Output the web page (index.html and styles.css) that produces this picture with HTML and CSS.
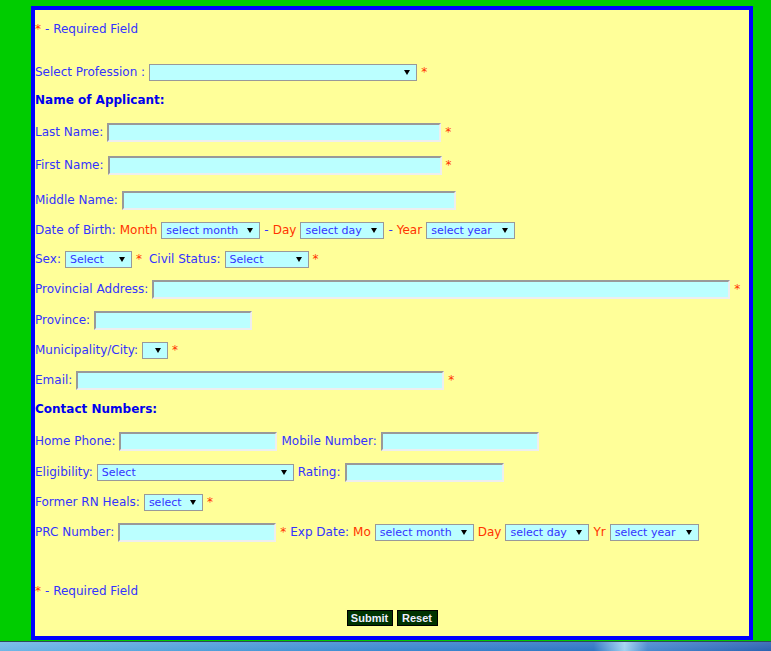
FILE: index.html
```html
<!DOCTYPE html>
<html>
<head>
<meta charset="utf-8">
<title>Application Form</title>
<link rel="stylesheet" href="styles.css">
</head>
<body>
<div class="frame">
  <form class="form">
    <div class="row g9"><span class="req">*</span><span class="lbl">- Required Field</span></div>

    <div class="row g23">
      <span class="lbl">Select Profession :</span>
      <span class="dd"><select class="w268"><option></option></select></span>
      <span class="req">*</span>
    </div>

    <div class="row g8"><span class="head">Name of Applicant:</span></div>

    <div class="row g12">
      <span class="lbl">Last Name:</span>
      <input type="text" class="w334">
      <span class="req">*</span>
    </div>

    <div class="row g13">
      <span class="lbl">First Name:</span>
      <input type="text" class="w334">
      <span class="req">*</span>
    </div>

    <div class="row g15">
      <span class="lbl">Middle Name:</span>
      <input type="text" class="w334">
    </div>

    <div class="row g10">
      <span class="lbl">Date of Birth:</span>
      <span class="req">Month</span>
      <span class="dd"><select class="w99"><option>select month</option></select></span>
      <span class="lbl">-</span><span class="req">Day</span>
      <span class="dd"><select class="w84"><option>select day</option></select></span>
      <span class="lbl">-</span><span class="req">Year</span>
      <span class="dd"><select class="w89"><option>select year</option></select></span>
    </div>

    <div class="row g9">
      <span class="lbl">Sex:</span>
      <span class="dd"><select class="w67"><option>Select</option></select></span>
      <span class="req">*</span>
      <span class="lbl civil">Civil Status:</span>
      <span class="dd"><select class="w84"><option>Select</option></select></span>
      <span class="req">*</span>
    </div>

    <div class="row g10">
      <span class="lbl">Provincial Address:</span>
      <input type="text" class="w578">
      <span class="req">*</span>
    </div>

    <div class="row g11">
      <span class="lbl">Province:</span>
      <input type="text" class="w158">
    </div>

    <div class="row g10">
      <span class="lbl">Municipality/City:</span>
      <span class="dd"><select class="w26"><option></option></select></span>
      <span class="req">*</span>
    </div>

    <div class="row g10">
      <span class="lbl">Email:</span>
      <input type="text" class="w368">
      <span class="req">*</span>
    </div>

    <div class="row g9"><span class="head">Contact Numbers:</span></div>

    <div class="row g12">
      <span class="lbl">Home Phone:</span>
      <input type="text" class="w158">
      <span class="lbl">Mobile Number:</span>
      <input type="text" class="w158">
    </div>

    <div class="row g11">
      <span class="lbl">Eligibility:</span>
      <span class="dd"><select class="w197"><option>Select</option></select></span>
      <span class="lbl">Rating:</span>
      <input type="text" class="w159">
    </div>

    <div class="row g10">
      <span class="lbl">Former RN Heals:</span>
      <span class="dd"><select class="w59"><option>select</option></select></span>
      <span class="req">*</span>
    </div>

    <div class="row g10">
      <span class="lbl">PRC Number:</span>
      <input type="text" class="w158">
      <span class="req">*</span>
      <span class="lbl">Exp Date:</span>
      <span class="req">Mo</span>
      <span class="dd"><select class="w99"><option>select month</option></select></span>
      <span class="req">Day</span>
      <span class="dd"><select class="w84"><option>select day</option></select></span>
      <span class="req">Yr</span>
      <span class="dd"><select class="w89"><option>select year</option></select></span>
    </div>

    <div class="row g39"><span class="req">*</span><span class="lbl">- Required Field</span></div>

    <div class="row buttons g7">
      <button type="submit" class="btn btn-submit">Submit</button>
      <button type="reset" class="btn btn-reset">Reset</button>
    </div>
  </form>
</div>
<div class="taskbar"></div>
</body>
</html>
```

FILE: styles.css
```css
html, body {
  margin: 0;
  padding: 0;
}
body {
  background: #00cc00;
  font-family: "DejaVu Sans", Verdana, sans-serif;
  font-size: 12px;
  overflow: hidden;
}
.frame {
  box-sizing: border-box;
  margin: 6px 0 0 31px;
  width: 722px;
  height: 634px;
  border: 4px solid #0000ff;
  background: #ffff99;
}
.form {
  margin: 0;
  padding: 0;
}
.row {
  display: flex;
  align-items: center;
  gap: 4px;
  height: 20px;
  white-space: nowrap;
}
.g7 { margin-top: 7px; }
.g8 { margin-top: 8px; }
.g9 { margin-top: 9px; }
.g10 { margin-top: 10px; }
.g11 { margin-top: 11px; }
.g12 { margin-top: 12px; }
.g13 { margin-top: 13px; }
.g15 { margin-top: 15px; }
.g23 { margin-top: 23px; }
.g39 { margin-top: 39px; }

.lbl { color: #3333ff; }
.req { color: #ff3300; }
.civil { margin-left: 3px; }
.head {
  color: #0000ee;
  font-weight: bold;
}

input[type="text"] {
  box-sizing: border-box;
  height: 19px;
  margin: 0;
  padding: 0 2px;
  background: #bbffff;
  border-top: 2px solid #999999;
  border-left: 2px solid #999999;
  border-bottom: 2px solid #eeeeee;
  border-right: 2px solid #eeeeee;
  font: 12px "DejaVu Sans", Verdana, sans-serif;
  color: #3333ff;
}

.dd {
  position: relative;
  display: inline-block;
  height: 17px;
}
.dd::after {
  content: "";
  position: absolute;
  right: 7px;
  top: 6px;
  border-left: 3.5px solid transparent;
  border-right: 3.5px solid transparent;
  border-top: 5px solid #000000;
  pointer-events: none;
}
.dd select {
  -webkit-appearance: none;
  appearance: none;
  box-sizing: border-box;
  display: block;
  height: 17px;
  margin: 0;
  padding: 1px 0 0 4px;
  background: #bbffff;
  border: 1px solid #999999;
  border-radius: 0;
  font: 11px "DejaVu Sans", Verdana, sans-serif;
  line-height: 14px;
  color: #3333ff;
}

.w26 { width: 26px; }
.w59 { width: 59px; }
.w67 { width: 67px; }
.w84 { width: 84px; }
.w89 { width: 89px; }
.w99 { width: 99px; }
.w158 { width: 158px; }
.w159 { width: 159px; }
.w197 { width: 197px; }
.w268 { width: 268px; }
.w334 { width: 334px; }
.w368 { width: 368px; }
.w578 { width: 578px; }

.buttons {
  justify-content: center;
}
.btn {
  box-sizing: border-box;
  height: 16px;
  margin: 0;
  padding: 0;
  background: #003300;
  border: 1px solid #000000;
  border-radius: 0;
  color: #eeeeff;
  font: bold 11px "Liberation Sans", Arial, sans-serif;
  line-height: 14px;
  text-align: center;
}
.btn-submit { width: 46px; }
.btn-reset { width: 41px; }

.taskbar {
  margin-top: 1px;
  height: 10px;
  border-top: 1px solid #2d4a5a;
  background:
    linear-gradient(to bottom, rgba(255,255,255,0.12), rgba(255,255,255,0)),
    linear-gradient(to right, #6db6e6 0%, #4fa0da 25%, #3a88d0 50%, #2c74c2 77%, #9fd2f0 81%, #4688ce 84%, #2860b0 100%);
}
```
